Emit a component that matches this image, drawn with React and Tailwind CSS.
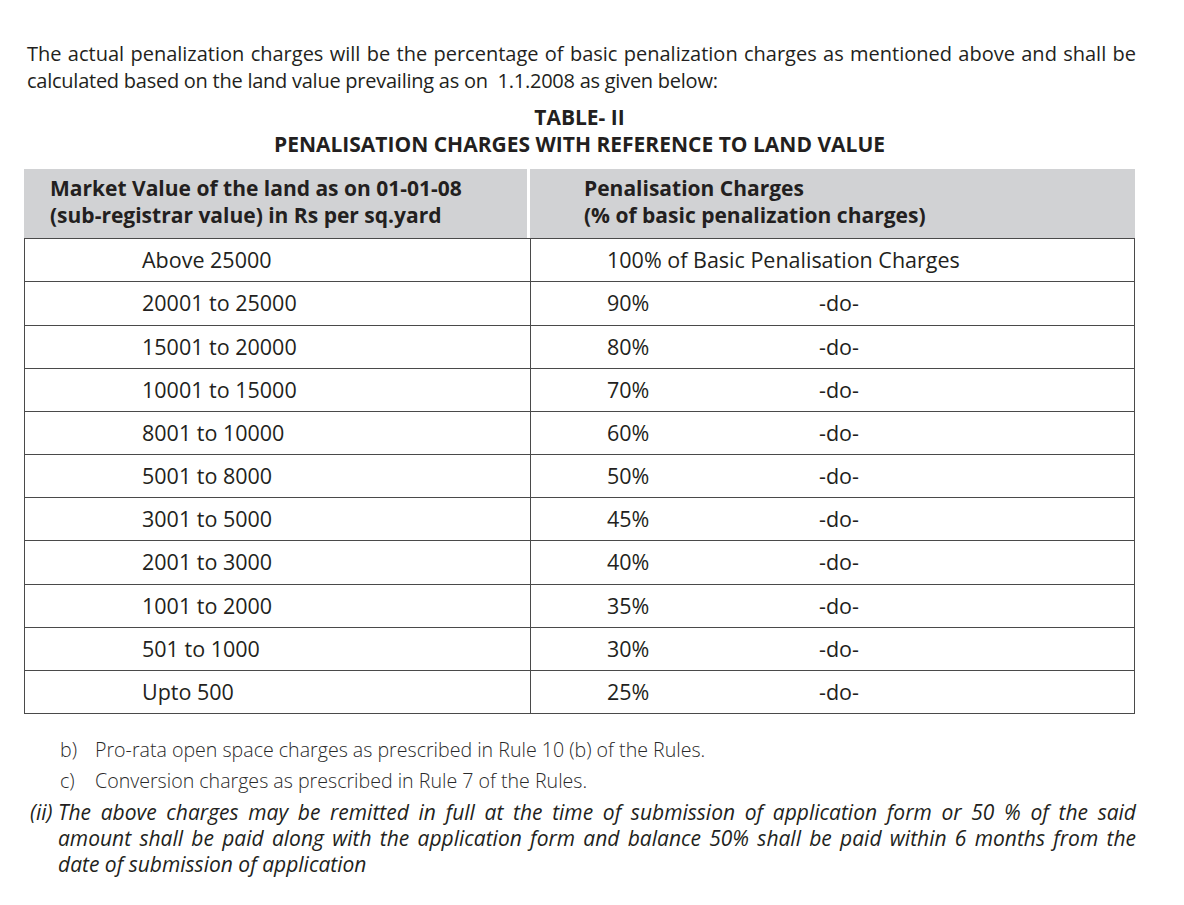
import React from 'react';

const rows = [
  { range: 'Above 25000', pct: '100% of Basic Penalisation Charges', full: true, h: 'h-[43px]' },
  { range: '20001 to 25000', pct: '90%', h: 'h-[44px]' },
  { range: '15001 to 20000', pct: '80%', h: 'h-[43px]' },
  { range: '10001 to 15000', pct: '70%', h: 'h-[43px]' },
  { range: '8001 to 10000', pct: '60%', h: 'h-[43px]' },
  { range: '5001 to 8000', pct: '50%', h: 'h-[43px]' },
  { range: '3001 to 5000', pct: '45%', h: 'h-[43px]' },
  { range: '2001 to 3000', pct: '40%', h: 'h-[44px]' },
  { range: '1001 to 2000', pct: '35%', h: 'h-[43px]' },
  { range: '501 to 1000', pct: '30%', h: 'h-[43px]' },
  { range: 'Upto 500', pct: '25%', h: 'h-[43px]' },
];

export default function App() {
  return (
    <div className="min-h-[905px] w-[1184px] bg-white text-[#231f20] font-['Open_Sans','Noto_Sans',sans-serif]">
      <div className="pl-[24px] pt-[40px] w-[1136px]">
        <div className="pl-[3px] text-[20px] leading-[27px]">
          <p className="text-justify [text-align-last:justify]">
            The actual penalization charges will be the percentage of basic penalization charges as mentioned above and shall be
          </p>
          <p className="tracking-[-0.25px]">
            calculated based on the land value prevailing as on&nbsp; 1.1.2008 as given below:
          </p>
        </div>

        <div className="mt-[10px] w-[1111px] text-center font-bold text-[21px] leading-[27px]">
          <div>TABLE- II</div>
          <div>PENALISATION CHARGES WITH REFERENCE TO LAND VALUE</div>
        </div>

        <div className="mt-[11px] w-[1111px]">
          <div className="flex h-[70px] bg-[#d1d2d4] border-b border-[#4a4a4a] font-bold text-[21px] leading-[27px]">
            <div className="w-[506px] flex flex-col justify-center pl-[26px] pb-[3px] border-r-[3px] border-white">
              <div>Market Value of the land as on 01-01-08</div>
              <div>(sub-registrar value) in Rs per sq.yard</div>
            </div>
            <div className="flex-1 flex flex-col justify-center pl-[54px] pb-[3px]">
              <div>Penalisation Charges</div>
              <div>(% of basic penalization charges)</div>
            </div>
          </div>
          {rows.map((r) => (
            <div key={r.range} className={`flex ${r.h} border-b border-x border-[#4a4a4a] text-[21.5px]`}>
              <div className="w-[506px] flex items-center pl-[117px] border-r border-[#4a4a4a]">{r.range}</div>
              <div className="flex-1 flex items-center pl-[76px]">
                {r.full ? (
                  <span>{r.pct}</span>
                ) : (
                  <>
                    <span className="w-[212px]">{r.pct}</span>
                    <span>-do-</span>
                  </>
                )}
              </div>
            </div>
          ))}
        </div>

        <div className="mt-[20px] text-[19.6px] leading-[31px] font-light text-[#2a2a2a]">
          <div className="flex pl-[36px]">
            <span className="w-[35px]">b)</span>
            <span>Pro-rata open space charges as prescribed in Rule 10 (b) of the Rules.</span>
          </div>
          <div className="flex pl-[36px]">
            <span className="w-[35px]">c)</span>
            <span>Conversion charges as prescribed in Rule 7 of the Rules.</span>
          </div>
        </div>

        <div className="flex pl-[6px] mt-[3px] italic text-[21px] leading-[26px]">
          <span className="w-[28px] shrink-0">(ii)</span>
          <div className="flex-1">
            <p className="text-justify [text-align-last:justify]">
              The above charges may be remitted in full at the time of submission of application form or 50 % of the said
            </p>
            <p className="text-justify [text-align-last:justify]">
              amount shall be paid along with the application form and balance 50% shall be paid within 6 months from the
            </p>
            <p>date of submission of application</p>
          </div>
        </div>
      </div>
    </div>
  );
}
